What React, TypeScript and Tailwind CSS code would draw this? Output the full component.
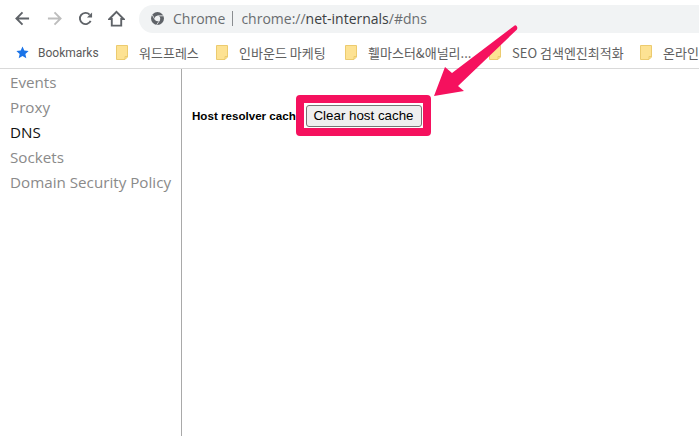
import React from "react";

function Folder() {
  return (
    <svg width="12" height="15" viewBox="0 0 12 15" className="shrink-0">
      <path d="M.5.5h11v11.500l-2.500 2.500H.5z" fill="#fde293" stroke="#eccb6f" />
      <path d="M9 14v-2.500h2.500" fill="none" stroke="#eccb6f" />
    </svg>
  );
}

function BM({ label, w }: { label: string; w: string }) {
  return (
    <div className={`flex items-center gap-[11px] shrink-0 ${w}`}>
      <Folder />
      <span className="text-[13px] leading-none text-[#606060] whitespace-nowrap font-['Noto_Sans_CJK_KR',sans-serif]">{label}</span>
    </div>
  );
}

export default function App() {
  return (
    <div className="relative w-[699px] h-[436px] overflow-hidden bg-white flex flex-col font-['Open_Sans','Noto_Sans_CJK_KR',sans-serif]">
      <div className="h-[37px] flex items-center pl-[15px] shrink-0">
        <svg width="15" height="15" viewBox="0 0 16 16" fill="none" stroke="#5f6368" strokeWidth="2">
          <path d="M15 8H2M8 1.500 1.500 8 8 14.500" />
        </svg>
        <svg width="15" height="15" viewBox="0 0 16 16" fill="none" stroke="#bdbdbd" strokeWidth="2" className="ml-[17px]">
          <path d="M1 8h13M8 1.500 14.500 8 8 14.500" />
        </svg>
        <svg width="15" height="15" viewBox="0 0 16 16" fill="none" className="ml-[16px]">
          <path d="M13.500 10.500A6 6 0 1 1 12.400 3.900" stroke="#5f6368" strokeWidth="2" />
          <path d="M9.500 7H15V1.500z" fill="#5f6368" />
        </svg>
        <svg width="17" height="17" viewBox="0 0 18 18" fill="none" stroke="#5f6368" strokeWidth="2" className="ml-[15px]">
          <path d="M1.500 9.500 9 2l7.500 7.500H14v7H4v-7z" />
        </svg>
        <div className="ml-[14px] flex-1 h-[28px] rounded-l-full bg-[#f1f3f4] flex items-center pl-[12px] text-[14px] whitespace-nowrap">
          <svg width="13" height="13" viewBox="0 0 16 16">
            <circle cx="8" cy="8" r="8" fill="#5f6368" />
            <circle cx="8" cy="8" r="3.300" fill="#f1f3f4" />
            <path d="M8 4.700h7.500M5.100 9.700 1.500 3.500M10.900 9.700 7 15.800" stroke="#f1f3f4" strokeWidth="1" />
          </svg>
          <span className="ml-[9px] text-[#6a6d70]">Chrome</span>
          <span className="ml-[7px] w-px h-[15px] bg-[#8a8d90]" />
          <span className="ml-[8px] text-[#6a6d70]">
            chrome://<span className="text-[#3c4043]">net-internals</span>/#dns
          </span>
        </div>
      </div>
      <div className="h-[32px] flex items-center pl-[16px] shrink-0 border-b border-[#d9d9d9] overflow-hidden">
        <svg width="13" height="13" viewBox="0 0 24 24" fill="#1a73e8" className="shrink-0">
          <path d="M12 1l3.300 7.400 8 .8-6 5.400 1.700 8L12 18.500 5 22.600l1.700-8-6-5.400 8-.8z" />
        </svg>
        <span className="ml-[9px] text-[12px] text-[#5a5a5a] w-[78px] shrink-0 font-['Roboto',sans-serif]">Bookmarks</span>
        <BM label="워드프레스" w="w-[100px]" />
        <BM label="인바운드 마케팅" w="w-[129px]" />
        <BM label="휄마스터&애널리..." w="w-[144px]" />
        <BM label="SEO 검색엔진최적화" w="w-[151px]" />
        <BM label="온라인" w="w-[70px]" />
      </div>
      <div className="flex-1 flex min-h-0">
        <nav className="w-[182px] shrink-0 border-r border-[#a9a9a9] pt-[1px] pl-[10px] text-[15.200px] leading-[25px] text-[#8a8a8a]">
          <div>Events</div>
          <div>Proxy</div>
          <div className="text-[#111]">DNS</div>
          <div>Sockets</div>
          <div className="whitespace-nowrap">Domain Security Policy</div>
        </nav>
        <main className="flex-1 pl-[10px] pt-[26px]">
          <div className="flex items-center">
            <span className="w-[104px] whitespace-nowrap text-[11.600px] font-bold text-black font-['Liberation_Sans',sans-serif]">Host resolver cache</span>
            <div className="relative z-10 border-[8px] border-[#f5115e] rounded-[4px] bg-white w-[135px] h-[41px] flex items-center justify-center">
              <button className="w-[116px] h-[22px] bg-[#efefef] border border-[#767676] rounded-[3px] text-[13.330px] text-black whitespace-nowrap font-['Liberation_Sans',sans-serif]">Clear host cache</button>
            </div>
          </div>
        </main>
      </div>
      <svg className="absolute z-20 left-[425px] top-[20px]" width="100" height="80" viewBox="0 0 100 80">
        <path d="M91 5.500 Q90 5 89 6 L27 53 L20 47 L9 76 L39 71 L33 66 L92 9.500 Q93 6.500 91 5.500z" fill="#f5115e" />
      </svg>
    </div>
  );
}
